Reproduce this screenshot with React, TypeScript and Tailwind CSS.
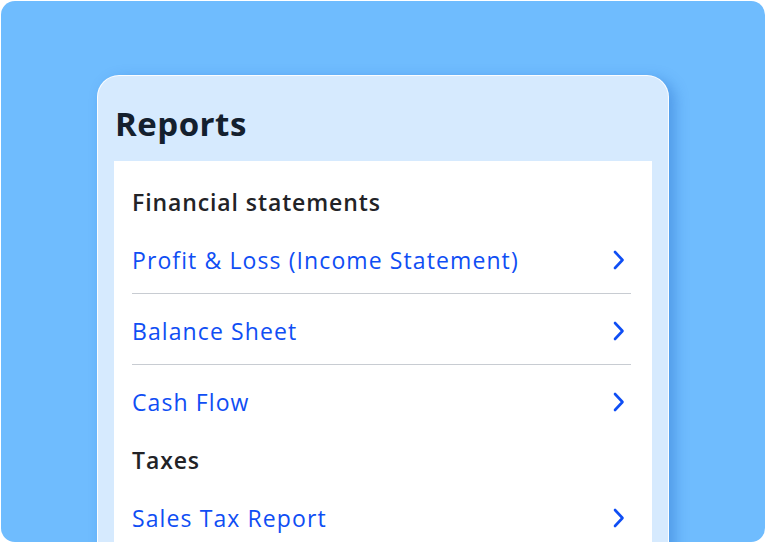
const font = { fontFamily: "'Open Sans', 'Noto Sans', sans-serif" };

function Chevron() {
  return (
    <svg width="12" height="20" viewBox="0 0 12 20" fill="none" className="text-[#0f4ef4]">
      <polyline
        points="2,2 9.5,10 2,18"
        stroke="currentColor"
        strokeWidth="2.6"
        strokeLinecap="round"
        strokeLinejoin="round"
      />
    </svg>
  );
}

function LinkRow({ label }: { label: string }) {
  return (
    <div className="flex h-[58px] items-center justify-between pr-[6px]">
      <span className="text-[23px] tracking-[1.1px] text-[#0f4ef4]">{label}</span>
      <Chevron />
    </div>
  );
}

function SectionTitle({ label }: { label: string }) {
  return (
    <div className="flex h-[58px] items-center">
      <span className="text-[23px] font-semibold tracking-[0.9px] text-[#222327]">{label}</span>
    </div>
  );
}

function Divider() {
  return <div className="mt-1 mb-2 h-px bg-[#c8ccd2]" />;
}

export default function App() {
  return (
    <div className="h-[543px] w-[766px] overflow-hidden bg-white p-px" style={font}>
      <div className="h-full w-full overflow-hidden rounded-[14px] bg-[#6fbcfe] pl-[96px] pt-[74px]">
        <div className="h-[520px] w-[572px] rounded-t-[22px] border border-white/90 bg-[#d6eafe] px-[16px] shadow-[6px_4px_14px_rgba(20,90,190,0.35)]">
          <h1 className="flex h-[85px] items-center pl-[1px] pt-[10px] text-[33px] font-bold tracking-[0.5px] text-[#14202e]">
            Reports
          </h1>
          <div className="h-[400px] bg-white pl-[18px] pr-[21px] pt-[12px]">
            <SectionTitle label="Financial statements" />
            <LinkRow label="Profit & Loss (Income Statement)" />
            <Divider />
            <LinkRow label="Balance Sheet" />
            <Divider />
            <LinkRow label="Cash Flow" />
            <SectionTitle label="Taxes" />
            <LinkRow label="Sales Tax Report" />
          </div>
        </div>
      </div>
    </div>
  );
}
